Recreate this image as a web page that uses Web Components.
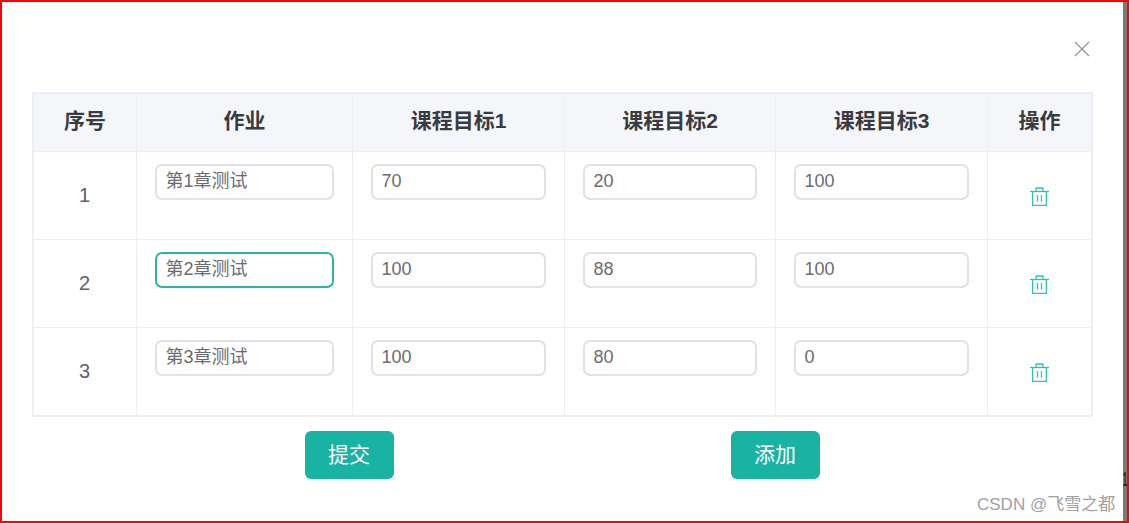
<!DOCTYPE html>
<html lang="zh">
<head>
<meta charset="utf-8">
<title>作业</title>
<style>
    html, body { margin: 0; height: 100%; background: #fff; }
    body { font-family: "Liberation Sans", "Noto Sans CJK SC", sans-serif; }
</style>
</head>
<body>
<score-dialog>
    <score-table>
        <score-row header>
            <score-cell head>序号</score-cell><score-cell head>作业</score-cell><score-cell head>课程目标1</score-cell>
            <score-cell head>课程目标2</score-cell><score-cell head>课程目标3</score-cell><score-cell head>操作</score-cell>
        </score-row>
        <score-row>
            <score-cell num>1</score-cell>
            <score-cell field><score-input>第1章测试</score-input></score-cell>
            <score-cell field><score-input>70</score-input></score-cell>
            <score-cell field><score-input>20</score-input></score-cell>
            <score-cell field><score-input>100</score-input></score-cell>
            <score-cell><trash-icon></trash-icon></score-cell>
        </score-row>
        <score-row>
            <score-cell num>2</score-cell>
            <score-cell field><score-input focused>第2章测试</score-input></score-cell>
            <score-cell field><score-input>100</score-input></score-cell>
            <score-cell field><score-input>88</score-input></score-cell>
            <score-cell field><score-input>100</score-input></score-cell>
            <score-cell><trash-icon></trash-icon></score-cell>
        </score-row>
        <score-row>
            <score-cell num>3</score-cell>
            <score-cell field><score-input>第3章测试</score-input></score-cell>
            <score-cell field><score-input>100</score-input></score-cell>
            <score-cell field><score-input>80</score-input></score-cell>
            <score-cell field><score-input>0</score-input></score-cell>
            <score-cell><trash-icon></trash-icon></score-cell>
        </score-row>
    </score-table>
    <score-button slot="footer">提交</score-button>
    <score-button slot="footer">添加</score-button>
</score-dialog>
<script>
    class ScoreDialog extends HTMLElement {
        constructor() {
            super();
            this.attachShadow({ mode: 'open' });
            this.shadowRoot.innerHTML = `
                <style>
                    :host {
                        display: flex;
                        position: relative;
                        width: 1129px;
                        height: 523px;
                        box-sizing: border-box;
                        border: 2px solid #f00;
                        overflow: hidden;
                    }
                    .main {
                        flex: 1;
                        padding: 90px 30px 0 30px;
                    }
                    .footer {
                        display: flex;
                        gap: 337px;
                        padding: 14px 0 0 273px;
                    }
                    .strip {
                        width: 4px;
                        background: #7a7a7a;
                    }
                    .close {
                        position: absolute;
                        left: 1072px;
                        top: 39px;
                        width: 16px;
                        height: 16px;
                    }
                    .mark {
                        position: absolute;
                        left: 975px;
                        top: 492px;
                        font-size: 17px;
                        line-height: 22px;
                        color: #a0a0a0;
                        white-space: nowrap;
                    }
                    .one {
                        position: absolute;
                        left: 1121px;
                        top: 467px;
                        font-size: 20px;
                        font-weight: bold;
                        line-height: 20px;
                        color: #222;
                        transform: scaleX(0.36);
                        transform-origin: left top;
                    }
                </style>
                <div class="main">
                    <slot></slot>
                    <div class="footer"><slot name="footer"></slot></div>
                </div>
                <div class="strip"></div>
                <svg class="close" viewBox="0 0 16 16" fill="none" stroke="#909399" stroke-width="1.2">
                    <path d="M1 1 L15 15 M15 1 L1 15"/>
                </svg>
                <div class="mark">CSDN @飞雪之都</div>
                <div class="one">1</div>
            `;
        }
    }

    class ScoreTable extends HTMLElement {
        constructor() {
            super();
            this.attachShadow({ mode: 'open' });
            this.shadowRoot.innerHTML = `
                <style>
                    :host {
                        display: block;
                        width: 1061px;
                        box-sizing: border-box;
                        border: 2px solid #ebeef5;
                    }
                </style>
                <slot></slot>
            `;
        }
    }

    class ScoreRow extends HTMLElement {
        constructor() {
            super();
            this.attachShadow({ mode: 'open' });
            this.shadowRoot.innerHTML = `
                <style>
                    :host {
                        display: grid;
                        grid-template-columns: 103px 216px 212px 211px 212px 103px;
                        height: 88px;
                        box-sizing: border-box;
                        border-bottom: 1px solid #ebeef5;
                        font-size: 20px;
                        color: #606266;
                    }
                    :host(:last-child) {
                        height: 87px;
                        border-bottom: 0;
                    }
                    :host([header]) {
                        height: 58px;
                        background: #f5f6fa;
                        font-size: 21px;
                        font-weight: bold;
                        color: #393b40;
                    }
                </style>
                <slot></slot>
            `;
        }
    }

    class ScoreCell extends HTMLElement {
        constructor() {
            super();
            this.attachShadow({ mode: 'open' });
            this.shadowRoot.innerHTML = `
                <style>
                    :host {
                        display: flex;
                        align-items: center;
                        justify-content: center;
                        box-sizing: border-box;
                        border-right: 1px solid #ebeef5;
                        min-width: 0;
                    }
                    :host(:last-child) {
                        border-right: 0;
                    }
                    :host([field]) {
                        display: block;
                        padding: 12px 18px;
                    }
                    :host([head]) {
                        padding-bottom: 8px;
                    }
                    :host([num]) {
                        padding-right: 1px;
                    }
                </style>
                <slot></slot>
            `;
        }
    }

    class ScoreInput extends HTMLElement {
        constructor() {
            super();
            this.attachShadow({ mode: 'open' });
            this.shadowRoot.innerHTML = `
                <style>
                    :host {
                        display: block;
                        height: 36px;
                        box-sizing: border-box;
                        padding: 0 8.5px;
                        border: 2px solid #e0e2e8;
                        border-radius: 7px;
                        font-size: 18px;
                        line-height: 31px;
                        color: #6a6c71;
                        background: #fff;
                    }
                    :host([focused]) {
                        border-color: #2ab5a5;
                    }
                </style>
                <slot></slot>
            `;
        }
    }

    class ScoreButton extends HTMLElement {
        constructor() {
            super();
            this.attachShadow({ mode: 'open' });
            this.shadowRoot.innerHTML = `
                <style>
                    :host {
                        display: flex;
                        align-items: center;
                        justify-content: center;
                        box-sizing: border-box;
                        width: 89px;
                        height: 48px;
                        padding: 0 1px 4px 0;
                        border-radius: 6px;
                        background: #18b3a2;
                        color: #fff;
                        font-size: 21px;
                    }
                </style>
                <slot></slot>
            `;
        }
    }

    class TrashIcon extends HTMLElement {
        constructor() {
            super();
            this.attachShadow({ mode: 'open' });
            this.shadowRoot.innerHTML = `
                <style>
                    :host {
                        display: block;
                        width: 19px;
                        height: 19px;
                        margin: 1px 1px 0 0;
                    }
                    svg { display: block; }
                </style>
                <svg width="19" height="19" viewBox="0 0 19 19" fill="none" stroke="#2cc4b1" stroke-width="1.3">
                    <path d="M0 4.5 H19"/>
                    <path d="M6.2 4.5 V1 H12.8 V4.5"/>
                    <path d="M2.6 4.5 V18.3 H16.4 V4.5"/>
                    <path d="M7.5 8 V14.5 M11.5 8 V14.5"/>
                </svg>
            `;
        }
    }

    customElements.define('score-dialog', ScoreDialog);
    customElements.define('score-table', ScoreTable);
    customElements.define('score-row', ScoreRow);
    customElements.define('score-cell', ScoreCell);
    customElements.define('score-input', ScoreInput);
    customElements.define('score-button', ScoreButton);
    customElements.define('trash-icon', TrashIcon);
</script>
</body>
</html>
